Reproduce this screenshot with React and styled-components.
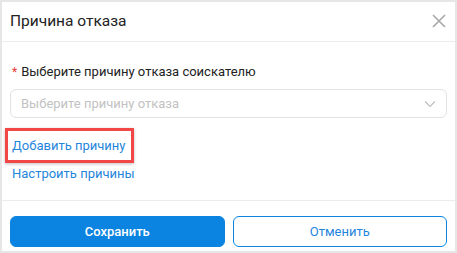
import React, { useState } from "react";
import styled, { createGlobalStyle } from "styled-components";

const GlobalStyle = createGlobalStyle`
    html, body {
        margin: 0;
        padding: 0;
        background: #ffffff;
    }
    body {
        font-family: Roboto, "Noto Sans", "Liberation Sans", sans-serif;
        -webkit-font-smoothing: antialiased;
    }
`;

const Dialog = styled.div`
    box-sizing: border-box;
    width: 457px;
    height: 253px;
    border: 2px solid #e6e6e6;
    display: flex;
    flex-direction: column;
    background: #fff;
`;

const Header = styled.div`
    height: 40px;
    flex-shrink: 0;
    display: flex;
    align-items: center;
    justify-content: space-between;
    padding: 0 8px 2px 8px;
    box-sizing: border-box;
    border-bottom: 1px solid #ececec;
`;

const Title = styled.h2`
    margin: 0;
    font-size: 15.5px;
    font-weight: 400;
    color: #222;
`;

const CloseButton = styled.button`
    border: 0;
    background: none;
    padding: 0;
    width: 16px;
    height: 16px;
    display: flex;
    align-items: center;
    justify-content: center;
    cursor: pointer;
`;

const Body = styled.div`
    flex: 1;
    padding: 22px 8px 0 8px;
    display: flex;
    flex-direction: column;
    align-items: flex-start;
`;

const Label = styled.label`
    font-size: 13px;
    line-height: 16px;
    color: #222;
    display: flex;
    align-items: center;
    gap: 4px;
    margin-left: 2px;
    margin-bottom: 9px;
`;

const Required = styled.span`
    color: #e53935;
    font-size: 12px;
`;

const SelectBox = styled.div`
    box-sizing: border-box;
    width: 100%;
    height: 29px;
    border: 1px solid #e2e2e2;
    border-radius: 6px;
    display: flex;
    align-items: center;
    justify-content: space-between;
    padding: 0 10px;
    font-size: 13px;
    color: #c2c2c2;
    cursor: pointer;
`;

const Links = styled.div`
    display: flex;
    flex-direction: column;
    gap: 12px;
    margin-top: 20px;
    margin-left: 2px;
`;

const LinkText = styled.a`
    font-size: 13px;
    line-height: 16px;
    color: #1f86dc;
    text-decoration: none;
    cursor: pointer;
    position: relative;
    align-self: flex-start;

    ${(p) =>
        p.$highlighted &&
        `
        &::after {
            content: "";
            position: absolute;
            top: -10px;
            bottom: -9px;
            left: -7px;
            right: -9px;
            border: 3px solid #f24747;
            box-shadow: 0 1px 3px rgba(0, 0, 0, 0.25);
            pointer-events: none;
        }
    `}
`;

const Footer = styled.div`
    flex-shrink: 0;
    border-top: 1px solid #ececec;
    display: grid;
    grid-template-columns: 1fr 1fr;
    gap: 8px;
    padding: 15px 8px 4px 8px;
`;

const Button = styled.button`
    height: 31px;
    border-radius: 6px;
    font-family: inherit;
    font-size: 13px;
    cursor: pointer;
    border: 1px solid #0a84e0;
    background: ${(p) => (p.$primary ? "#0a84e0" : "#ffffff")};
    color: ${(p) => (p.$primary ? "#ffffff" : "#1f86dc")};
    font-weight: ${(p) => (p.$primary ? 500 : 400)};
`;

const App = () => {
    const [reason] = useState(null);

    return (
        <>
            <GlobalStyle />
            <Dialog>
                <Header>
                    <Title>Причина отказа</Title>
                    <CloseButton aria-label="close">
                        <svg width="14" height="14" viewBox="0 0 14 14">
                            <path
                                d="M1 1L13 13M13 1L1 13"
                                stroke="#a8a8a8"
                                strokeWidth="1.6"
                                fill="none"
                            />
                        </svg>
                    </CloseButton>
                </Header>
                <Body>
                    <Label>
                        <Required>*</Required>
                        Выберите причину отказа соискателю
                    </Label>
                    <SelectBox>
                        <span>{reason || "Выберите причину отказа"}</span>
                        <svg width="12" height="8" viewBox="0 0 12 8">
                            <path
                                d="M1 1.5L6 6.5L11 1.5"
                                stroke="#bdbdbd"
                                strokeWidth="1.1"
                                fill="none"
                            />
                        </svg>
                    </SelectBox>
                    <Links>
                        <LinkText $highlighted>Добавить причину</LinkText>
                        <LinkText>Настроить причины</LinkText>
                    </Links>
                </Body>
                <Footer>
                    <Button $primary>Сохранить</Button>
                    <Button>Отменить</Button>
                </Footer>
            </Dialog>
        </>
    );
};

export default App;
